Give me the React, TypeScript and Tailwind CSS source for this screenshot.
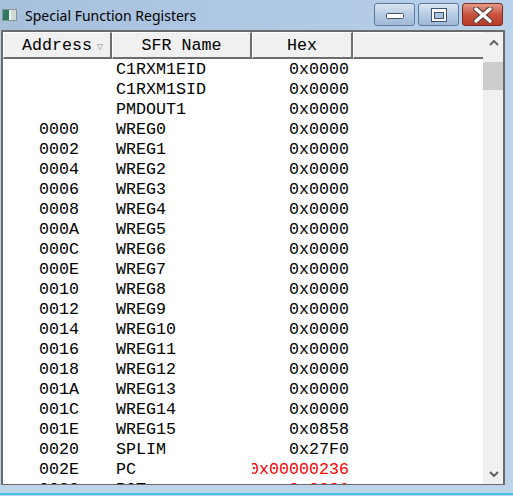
import React from 'react';

type Row = { addr: string; name: string; hex: string; red?: boolean };

const rows: Row[] = [
  { addr: '', name: 'C1RXM1EID', hex: '0x0000' },
  { addr: '', name: 'C1RXM1SID', hex: '0x0000' },
  { addr: '', name: 'PMDOUT1', hex: '0x0000' },
  ...Array.from({ length: 16 }, (_, i) => ({
    addr: (i * 2).toString(16).toUpperCase().padStart(4, '0'),
    name: `WREG${i}`,
    hex: i === 15 ? '0x0858' : '0x0000',
  })),
  { addr: '0020', name: 'SPLIM', hex: '0x27F0' },
  { addr: '002E', name: 'PC', hex: '0x00000236', red: true },
  { addr: '0032', name: 'RCT', hex: '0x0026', red: true },
];

const mono = { fontFamily: '"Liberation Mono", "Courier New", monospace' };

const TitleIcon = () => (
  <svg width="15" height="12" viewBox="0 0 15 12">
    <rect x="0.5" y="0.5" width="14" height="11" fill="#f4f6f4" stroke="#8a9490" />
    <rect x="1" y="1" width="6" height="10" fill="#2f7a62" />
    <rect x="9" y="1" width="5" height="10" fill="#cfdcd6" />
  </svg>
);

const Chevron = ({ down }: { down?: boolean }) => (
  <svg width="10" height="6" viewBox="0 0 10 6">
    <path
      d={down ? 'M1 1 L5 5 L9 1' : 'M1 5 L5 1 L9 5'}
      fill="none"
      stroke="#5a5a5a"
      strokeWidth="1.8"
    />
  </svg>
);

export default function App() {
  return (
    <div className="w-[513px] h-[496px] overflow-hidden bg-[#bcd3ea] flex flex-col">
      {/* Title bar */}
      <div className="h-[30px] flex items-start bg-gradient-to-r from-[#a6c0dc] to-[#b9d1ea]">
        <div className="mt-[9px] ml-[2px]">
          <TitleIcon />
        </div>
        <span
          className="ml-[8px] mt-[6px] text-[14px] leading-[19px] text-black"
          style={{ fontFamily: '"Noto Sans", "Open Sans", sans-serif' }}
        >
          Special Function Registers
        </span>
        <div className="ml-auto mr-[10px] mt-[3px] flex gap-[3px]">
          <div className="w-[41px] h-[23px] rounded-[3px] border border-[#5b7aa0] bg-gradient-to-b from-[#dbe6f2] via-[#b7cbe2] to-[#9fb9d8] flex items-center justify-center">
            <svg width="18" height="8" viewBox="0 0 18 8">
              <rect x="0.5" y="2.5" width="17" height="5" rx="1" fill="#ffffff" stroke="#3e5370" />
            </svg>
          </div>
          <div className="w-[41px] h-[23px] rounded-[3px] border border-[#5b7aa0] bg-gradient-to-b from-[#dbe6f2] via-[#b7cbe2] to-[#9fb9d8] flex items-center justify-center">
            <svg width="16" height="14" viewBox="0 0 16 14">
              <rect x="0.5" y="0.5" width="15" height="13" fill="#ffffff" stroke="#3e5370" />
              <rect x="3.5" y="4.5" width="9" height="6" fill="#a9c0da" stroke="#3e5370" />
            </svg>
          </div>
          <div className="w-[41px] h-[23px] rounded-[3px] border border-[#7a2b20] bg-gradient-to-b from-[#e39a8a] via-[#c9533d] to-[#b83a24] flex items-center justify-center">
            <svg width="20" height="16" viewBox="0 0 20 16">
              <path d="M3 2 L17 14 M17 2 L3 14" stroke="#4a3a38" strokeWidth="5.5" strokeLinecap="round" />
              <path d="M3 2 L17 14 M17 2 L3 14" stroke="#ffffff" strokeWidth="3.5" strokeLinecap="round" />
            </svg>
          </div>
        </div>
      </div>

      {/* Frame */}
      <div className="ml-[1px] w-[504px] h-[455px] border-t-2 border-l-2 border-r-2 border-b border-[#6a6a6a] flex bg-white">
        {/* Table */}
        <div className="w-[480px] h-full overflow-hidden flex flex-col" style={mono}>
          <div className="h-[27px] flex shrink-0 text-[16.67px] text-black">
            <div className="w-[109px] h-full bg-[#f0f0f0] border-t border-l border-white border-r-2 border-b-2 border-r-[#6d6d6d] border-b-[#6d6d6d] flex items-center pl-[18px]">
              <span>Address</span>
              <span className="ml-[5px] mt-[4px] text-[8px] text-[#888]" style={{ fontFamily: '"DejaVu Sans", sans-serif' }}>▽</span>
            </div>
            <div className="w-[140px] h-full bg-[#f0f0f0] border-t border-l border-white border-r-2 border-b-2 border-r-[#6d6d6d] border-b-[#6d6d6d] flex items-center justify-center">
              SFR Name
            </div>
            <div className="w-[101px] h-full bg-[#f0f0f0] border-t border-l border-white border-r-2 border-b-2 border-r-[#6d6d6d] border-b-[#6d6d6d] flex items-center justify-center">
              Hex
            </div>
            <div className="w-[130px] h-full bg-[#f0f0f0] border-t border-l border-white border-b-2 border-b-[#6d6d6d]" />
          </div>
          <div className="flex-1 overflow-hidden pt-[1px]">
            {rows.map((r, i) => (
              <div key={i} className="h-[20px] flex items-center text-[16.67px] leading-[20px] whitespace-nowrap">
                <div className="w-[109px] pl-[36px] text-black">{r.addr}</div>
                <div className="w-[140px] pl-[4px] text-black">{r.name}</div>
                <div className={`w-[101px] pr-[4px] overflow-hidden flex justify-end ${r.red ? 'text-[#ff0000]' : 'text-black'}`}>
                  <span className="shrink-0">{r.hex}</span>
                </div>
              </div>
            ))}
          </div>
        </div>

        {/* Scrollbar */}
        <div className="w-[20px] h-full bg-[#f0f0f0] flex flex-col items-center">
          <div className="mt-[8px] ml-[1px]">
            <Chevron />
          </div>
          <div className="mt-[16px] w-full h-[28px] bg-[#cdcdcd]" />
          <div className="mt-auto mb-[7px] ml-[1px]">
            <Chevron down />
          </div>
        </div>
      </div>

      <div className="flex-1 flex flex-col justify-end">
        <div className="h-[2px] mb-[1px] bg-[#45c3e4]" />
      </div>
    </div>
  );
}
